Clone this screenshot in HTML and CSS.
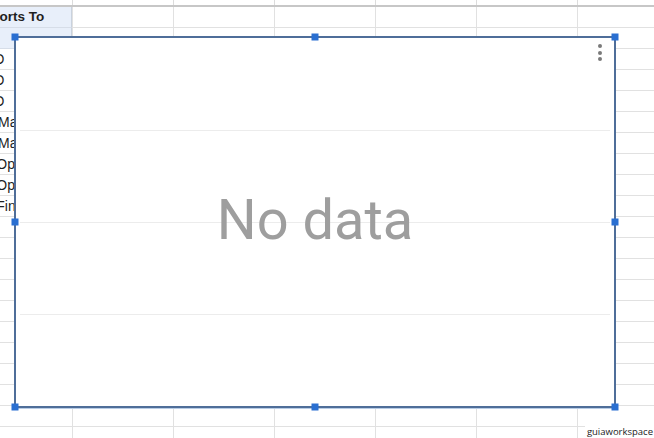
FILE: index.html
```html
<!DOCTYPE html>
<html>
<head>
<meta charset="utf-8">
<link rel="stylesheet" href="styles.css">
</head>
<body>
<div class="sheet">
  <div class="topstrip"></div>
  <div class="rows">
    <div class="col-a">
      <div class="cell head bold">Reports To</div>
      <div class="cell head"></div>
      <div class="cell">CEO</div>
      <div class="cell">CEO</div>
      <div class="cell">CEO</div>
      <div class="cell">HR Manager</div>
      <div class="cell">HR Manager</div>
      <div class="cell">VP Operations</div>
      <div class="cell">VP Operations</div>
      <div class="cell">VP Finance</div>
    </div>
  </div>
  <div class="chart">
    <div class="plot">
      <div class="band"></div>
      <div class="band line"></div>
      <div class="band line"></div>
      <div class="band line"></div>
    </div>
    <div class="nodata">No data</div>
    <div class="menu"><span class="dot"></span><span class="dot"></span><span class="dot"></span></div>
    <span class="handle h-tl"></span>
    <span class="handle h-tm"></span>
    <span class="handle h-tr"></span>
    <span class="handle h-ml"></span>
    <span class="handle h-mr"></span>
    <span class="handle h-bl"></span>
    <span class="handle h-bm"></span>
    <span class="handle h-br"></span>
  </div>
  <div class="watermark">guiaworkspace</div>
</div>
</body>
</html>
```
FILE: styles.css
```css
html, body {
  margin: 0;
  padding: 0;
  background: #ffffff;
}
.sheet {
  position: relative;
  width: 654px;
  height: 438px;
  overflow: hidden;
  display: flex;
  flex-direction: column;
  font-family: "Liberation Sans", Arial, sans-serif;
  font-size: 14px;
  color: #1f1f1f;
}
.topstrip {
  height: 5px;
  flex: none;
  border-bottom: 2px solid #c7c7c7;
  background-image: linear-gradient(to right, #dcdcdc 1px, transparent 1px);
  background-size: 101px 100%;
  background-position: 72px 0;
}
.rows {
  flex: 1;
  background-image:
    linear-gradient(to right, #e1e1e1 1px, transparent 1px),
    linear-gradient(to bottom, #e1e1e1 1px, transparent 1px);
  background-size: 101px 100%, 100% 21px;
  background-position: 72px 0, 0 20px;
}
.col-a {
  margin-left: -29px;
  width: 101px;
  display: flex;
  flex-direction: column;
}
.cell {
  height: 21px;
  box-sizing: border-box;
  padding: 0 3px;
  line-height: 20px;
  white-space: nowrap;
  overflow: hidden;
}
.cell.head {
  background: #e8effa;
  border-bottom: 1px solid #d6dde8;
  border-right: 1px solid #c9d2de;
}
.cell.bold {
  font-weight: bold;
  font-size: 13.5px;
}
.chart {
  position: absolute;
  left: 14px;
  top: 36px;
  width: 602px;
  height: 372px;
  box-sizing: border-box;
  border: 2px solid #4f6e99;
  background: #ffffff;
  box-shadow: 0 1px 0 #b9cde6;
}
.plot {
  height: 100%;
  display: grid;
  grid-template-rows: repeat(4, 1fr);
  margin: 0 4px;
}
.band.line {
  border-top: 1px solid #ececec;
}
.nodata {
  position: absolute;
  inset: 0;
  display: flex;
  align-items: center;
  justify-content: center;
  font-family: Roboto, "Noto Sans", sans-serif;
  font-size: 56px;
  color: #9e9e9e;
  padding-bottom: 5px;
}
.menu {
  position: absolute;
  top: 6px;
  right: 12px;
  display: flex;
  flex-direction: column;
  gap: 2.5px;
}
.dot {
  width: 4px;
  height: 4px;
  border-radius: 50%;
  background: #7a7a7a;
}
.handle {
  position: absolute;
  width: 7px;
  height: 7px;
  background: #2a6fd1;
  transform: translate(-50%, -50%);
}
.h-tl { left: -1px; top: -1px; }
.h-tm { left: 50%; top: -1px; }
.h-tr { left: calc(100% + 1px); top: -1px; }
.h-ml { left: -1px; top: 50%; }
.h-mr { left: calc(100% + 1px); top: 50%; }
.h-bl { left: -1px; top: calc(100% + 1px); }
.h-bm { left: 50%; top: calc(100% + 1px); }
.h-br { left: calc(100% + 1px); top: calc(100% + 1px); }
.watermark {
  position: absolute;
  right: 0;
  bottom: 0;
  background: #ffffff;
  font-family: "Open Sans", "Liberation Sans", sans-serif;
  font-size: 9.5px;
  line-height: 12px;
  color: #222222;
  padding: 0 1px 0 2px;
}
```
